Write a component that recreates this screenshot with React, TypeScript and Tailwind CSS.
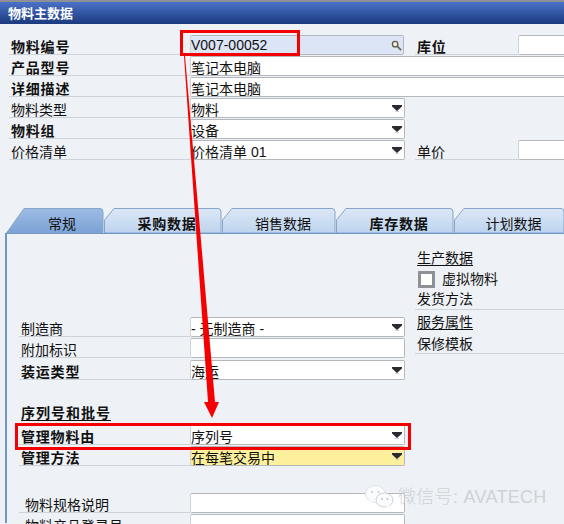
const fieldBase = "flex h-[20px] items-center rounded-[2px] border border-[#b4b7bb] border-l-[#d0d3d6] bg-white text-[14px] leading-none text-[#111]";

function DropArrow() {
  return (
    <svg className="ml-auto mr-[2px] shrink-0" width="10" height="7" viewBox="0 0 10 7">
      <path d="M0 0h10v1.5L5 6 0 1.5z" fill="#2a2a30" />
      <path d="M3 6.5h4" stroke="#cfcfcf" strokeWidth="1" />
    </svg>
  );
}

function Field({ value, width = 215, select, bg = "bg-white" }: { value?: string; width?: number; select?: boolean; bg?: string }) {
  return (
    <div className={`${fieldBase} ${bg} shrink-0`} style={{ width }}>
      <span className="whitespace-nowrap pt-[3px]">{value}</span>
      {select && <DropArrow />}
    </div>
  );
}

function Label({ text, bold, width, indent = 2 }: { text: string; bold?: boolean; width: number; indent?: number }) {
  return (
    <div
      className={`flex h-[20px] shrink-0 items-end border-b border-[#cdd3da] text-[14px] leading-[14px] text-[#111] ${bold ? "font-bold tracking-[0.8px]" : ""}`}
      style={{ width, paddingLeft: indent }}
    >
      {text}
    </div>
  );
}

function Tab({ text, width, bold, active, first }: { text: string; width: number; bold?: boolean; active?: boolean; first?: boolean }) {
  const slant = first ? 18 : 10;
  const d = first
    ? `M0.5 25 L${slant} 0.5 H${width - 4} Q${width - 1} 0.5 ${width - 1} 4 V25 Z`
    : `M0.5 25 V12 L${slant} 0.5 H${width - 4} Q${width - 1} 0.5 ${width - 1} 4 V25 Z`;
  return (
    <div className="relative flex h-[25px] shrink-0 items-center justify-center" style={{ width }}>
      <svg className="absolute inset-0" width={width} height="25" viewBox={`0 0 ${width} 25`}>
        <path d={d} fill={active ? "url(#tabActive)" : "url(#tabIdle)"} stroke="#85a5c9" strokeWidth="1" />
      </svg>
      <span className={`relative pt-[6px] text-[14px] leading-none text-[#111] ${first ? "pl-[14px]" : "pl-[8px]"} ${bold ? "font-bold tracking-[0.8px]" : ""}`}>{text}</span>
    </div>
  );
}

export default function App() {
  return (
    <div className="relative h-[524px] w-[564px] overflow-hidden bg-[#eef1f6] font-['Liberation_Sans','Noto_Sans_CJK_SC',sans-serif]">
      <svg width="0" height="0" className="absolute">
        <defs>
          <linearGradient id="tabActive" x1="0" y1="0" x2="0" y2="1">
            <stop offset="0" stopColor="#9dbce4" />
            <stop offset="1" stopColor="#7ba3d6" />
          </linearGradient>
          <linearGradient id="tabIdle" x1="0" y1="0" x2="0" y2="1">
            <stop offset="0" stopColor="#dce8f6" />
            <stop offset="1" stopColor="#bdd4ee" />
          </linearGradient>
        </defs>
      </svg>

      {/* Title bar */}
      <div className="border-t-2 border-[#8d9097]">
        <div className="flex h-[22px] items-center bg-gradient-to-b from-[#4a72c8] to-[#1b3a7e] pl-[8px] pt-[1px] text-[13px] font-bold leading-none text-white">
          物料主数据
        </div>
      </div>

      {/* Header fields */}
      <div className="flex flex-col gap-[1px] pl-[9px] pt-[11px]">
        <div className="flex">
          <Label text="物料编号" bold width={181} />
          <div className={`${fieldBase} w-[214px] shrink-0 !bg-[#dce5f5]`}>
            <span>V007-00052</span>
            <svg className="ml-auto mr-[1px]" width="11" height="11" viewBox="0 0 12 12">
              <circle cx="4.5" cy="4.5" r="3" fill="#f3efd8" stroke="#5a5a48" strokeWidth="1.4" />
              <path d="M7 7l4 4" stroke="#6b6650" strokeWidth="2" />
            </svg>
          </div>
          <div className="ml-[11px] flex">
            <Label text="库位" bold width={103} />
            <Field width={60} />
          </div>
        </div>
        <div className="flex">
          <Label text="产品型号" bold width={181} />
          <Field value="笔记本电脑" width={400} />
        </div>
        <div className="flex">
          <Label text="详细描述" bold width={181} />
          <Field value="笔记本电脑" width={400} />
        </div>
        <div className="flex">
          <Label text="物料类型" width={181} />
          <Field value="物料" select />
        </div>
        <div className="flex">
          <Label text="物料组" bold width={181} />
          <Field value="设备" select />
        </div>
        <div className="flex">
          <Label text="价格清单" width={181} />
          <Field value="价格清单 01" select />
          <div className="ml-[10px] flex">
            <Label text="单价" width={103} />
            <Field width={60} />
          </div>
        </div>
      </div>

      {/* Tabs */}
      <div className="mt-[48px] flex pl-[6px]">
        <Tab text="常规" width={98} active first />
        <Tab text="采购数据" width={118} bold />
        <Tab text="销售数据" width={114} />
        <Tab text="库存数据" width={118} bold />
        <Tab text="计划数据" width={111} />
      </div>

      {/* Tab panel */}
      <div className="ml-[5px] flex h-[290px] border-l-2 border-t border-[#6f98c6]">
        <div className="w-[398px] shrink-0 pl-[12px] pt-[83px]">
          <div className="flex flex-col">
            <div className="flex">
              <Label text="制造商" width={171} />
              <Field value="- 无制造商 -" select />
            </div>
            <div className="mt-[1px] flex">
              <Label text="附加标识" width={171} />
              <Field />
            </div>
            <div className="mt-[2px] flex">
              <Label text="装运类型" bold width={171} />
              <Field value="海运" select />
            </div>
          </div>
          <div className="mt-[24px] h-[19px] pl-[2px] text-[14px] font-bold leading-[18px] tracking-[1px] text-[#111] underline underline-offset-2">
            序列号和批号
          </div>
          <div className="mt-[2px] flex flex-col gap-[1px]">
            <div className="flex">
              <Label text="管理物料由" bold width={171} />
              <Field value="序列号" select />
            </div>
            <div className="flex">
              <Label text="管理方法" bold width={171} />
              <Field value="在每笔交易中" select bg="!bg-[#fdf09c]" />
            </div>
          </div>
          <div className="mt-[27px] flex flex-col gap-[1px]">
            <div className="flex">
              <Label text="物料规格说明" width={171} indent={6} />
              <Field />
            </div>
            <div className="flex">
              <Label text="物料产品登录号" width={171} indent={6} />
              <Field />
            </div>
          </div>
        </div>

        {/* Right column */}
        <div className="ml-[10px] flex-1 pt-[15px] text-[14px] leading-[18px] text-[#111]">
          <div className="h-[20px] pl-[2px] underline underline-offset-2">生产数据</div>
          <div className="flex h-[20px] items-center pl-[3px]">
            <div className="h-[17px] w-[17px] border-[3px] border-[#8e9196] bg-white" />
            <span className="ml-[7px]">虚拟物料</span>
          </div>
          <div className="mt-[1px] h-[20px] border-b border-[#cdd3da] pl-[2px]">发货方法</div>
          <div className="mt-[3px] h-[22px] pl-[2px] underline underline-offset-2">服务属性</div>
          <div className="h-[19px] border-b border-[#cdd3da] pl-[2px]">保修模板</div>
        </div>
      </div>

      {/* Red annotations drawn over the screenshot */}
      <div className="absolute left-[180px] top-[30px] h-[26px] w-[120px] border-[3px] border-[#f50000]" />
      <div className="absolute left-[15px] top-[423px] h-[27px] w-[396px] border-[3px] border-[#f50000]" />
      <svg className="absolute left-0 top-0" width="564" height="524" viewBox="0 0 564 524">
        <polygon points="184,56 185,56 215,402 219,402 212,418 204,402 208,402" fill="#f50000" />
      </svg>

      {/* Watermark */}
      <div className="absolute left-[365px] top-[485px] flex items-center">
        <svg width="29" height="24" viewBox="0 0 29 24">
          <ellipse cx="10.5" cy="9" rx="10" ry="8.5" fill="#fafbfc" stroke="#dfe1e4" />
          <path d="M4 15l-1 5 5-3z" fill="#fafbfc" />
          <ellipse cx="19.5" cy="15" rx="8.5" ry="7" fill="#fafbfc" stroke="#cfd2d6" />
          <path d="M24 20l2 4-5-2.5z" fill="#fafbfc" />
          <circle cx="7" cy="7" r="1.2" fill="#d4d6da" />
          <circle cx="13.5" cy="7" r="1.2" fill="#d4d6da" />
          <circle cx="17" cy="14" r="1" fill="#c4c7cc" />
          <circle cx="22.5" cy="14" r="1" fill="#c4c7cc" />
        </svg>
        <span className="ml-[4px] whitespace-nowrap text-[18px] font-light leading-none tracking-[0.3px] text-[#cfd2d7]">微信号: AVATECH</span>
      </div>
    </div>
  );
}
